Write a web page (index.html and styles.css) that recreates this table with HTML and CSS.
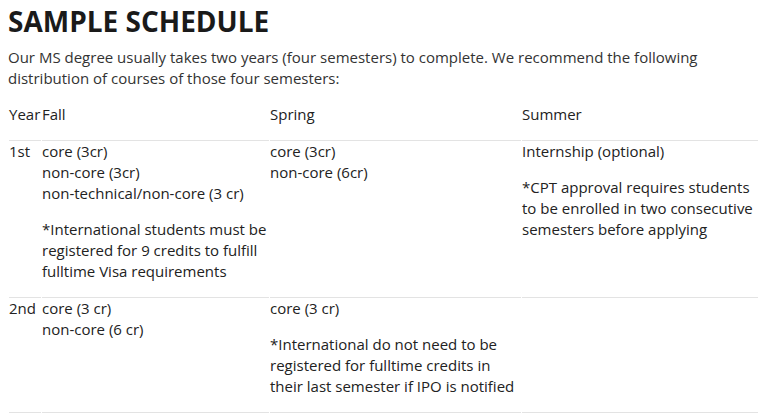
FILE: index.html
```html
<!DOCTYPE html>
<html lang="en">
<head>
<meta charset="utf-8">
<title>Sample Schedule</title>
<link rel="stylesheet" href="styles.css">
</head>
<body>
<main class="page">
  <h2 class="title">SAMPLE SCHEDULE</h2>
  <p class="intro">Our MS degree usually takes two years (four semesters) to complete. We recommend the following distribution of courses of those four semesters:</p>
  <table class="schedule">
    <colgroup>
      <col class="c-year">
      <col class="c-fall">
      <col class="c-spring">
      <col class="c-summer">
    </colgroup>
    <thead>
      <tr>
        <th><p>Year</p></th>
        <th><p>Fall</p></th>
        <th><p>Spring</p></th>
        <th><p>Summer</p></th>
      </tr>
    </thead>
    <tbody>
      <tr>
        <td><p>1st</p></td>
        <td>
          <p>core (3cr)<br>non-core (3cr)<br>non-technical/non-core (3 cr)</p>
          <p>*International students must be registered for 9 credits to fulfill fulltime Visa requirements</p>
        </td>
        <td><p>core (3cr)<br>non-core (6cr)</p></td>
        <td>
          <p>Internship (optional)</p>
          <p>*CPT approval requires students to be enrolled in two consecutive semesters before applying</p>
        </td>
      </tr>
      <tr>
        <td><p>2nd</p></td>
        <td><p>core (3 cr)<br>non-core (6 cr)</p></td>
        <td>
          <p>core (3 cr)</p>
          <p>*International do not need to be registered for fulltime credits in their last semester if IPO is notified</p>
        </td>
        <td></td>
      </tr>
    </tbody>
  </table>
</main>
</body>
</html>
```
FILE: styles.css
```css
html, body {
  margin: 0;
  padding: 0;
  background: #fff;
}
body {
  font-family: "Open Sans", "Liberation Sans", sans-serif;
  color: #222;
}
.page {
  padding: 0 0 0 8px;
}
.title {
  margin: 0;
  padding-top: 3px;
  font-size: 28px;
  line-height: 36px;
  font-weight: 700;
  color: #1a1a1a;
}
.intro {
  margin: 8px 0 16px;
  font-size: 15px;
  line-height: 20.5px;
  color: #333;
}
.schedule {
  width: 751px;
  table-layout: fixed;
  border-collapse: separate;
  border-spacing: 1px 0;
  font-size: 15px;
  line-height: 21px;
  color: #222;
}
.c-year { width: 32px; }
.c-fall { width: 227px; }
.c-spring { width: 251px; }
.c-summer { width: 236px; }
.schedule th,
.schedule td {
  padding: 0;
  text-align: left;
  vertical-align: top;
  font-weight: 400;
  border-bottom: 1px solid #e3e3e3;
}
.schedule p {
  margin: 0 0 15px;
}
```
